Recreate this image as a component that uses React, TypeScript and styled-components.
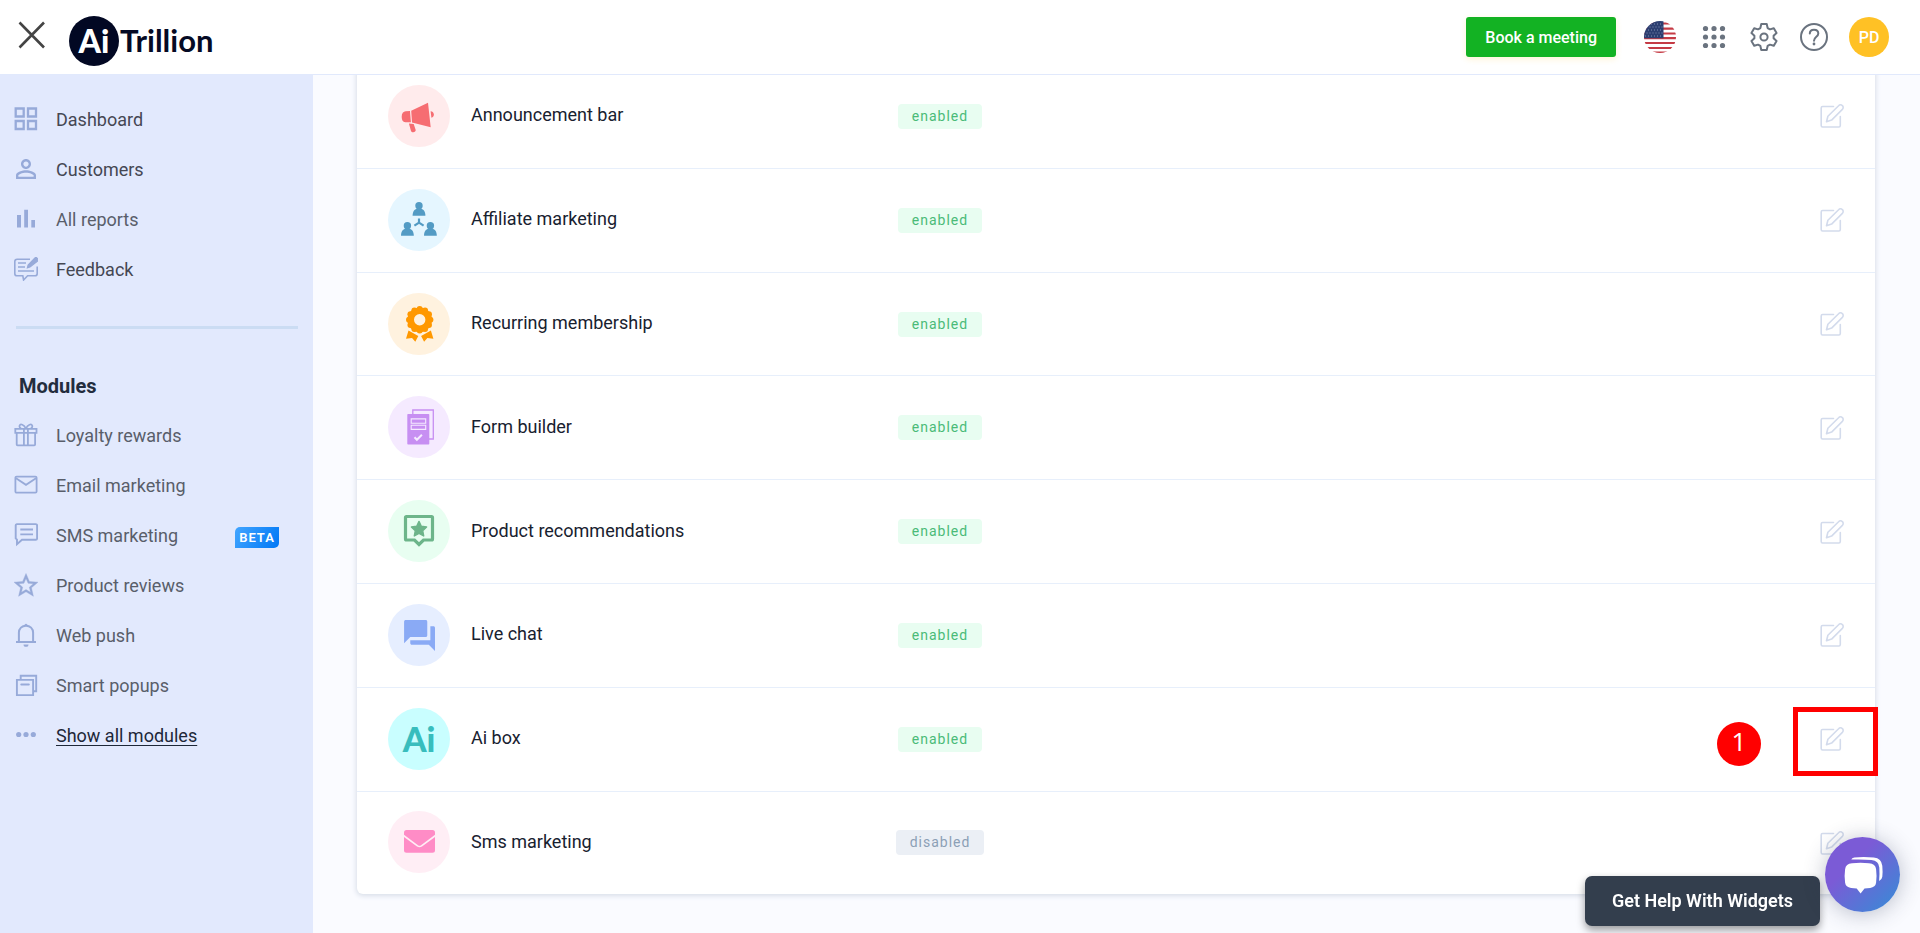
import React from "react";
import styled, { createGlobalStyle } from "styled-components";

const GlobalStyle = createGlobalStyle`
  *, *::before, *::after { box-sizing: border-box; }
  body {
    margin: 0;
    background: #fafbff;
    color: #212b3a;
    font-family: Roboto, "Liberation Sans", sans-serif;
    font-size: 18px;
  }
  button { font: inherit; border: 0; padding: 0; background: none; cursor: pointer; }
  a { color: inherit; text-decoration: none; }
`;

const Page = styled.div`
  min-height: 100vh;
  display: flex;
  flex-direction: column;
`;

/* ---------- header ---------- */

const Header = styled.header`
  display: flex;
  align-items: center;
  gap: 22px;
  height: 75px;
  padding: 0 31px 0 18px;
  background: #fff;
  border-bottom: 1px solid #e1e9fc;
  position: relative;
  z-index: 1;
`;

const CloseButton = styled.button`
  display: flex;
  width: 28px;
  height: 28px;
  margin-bottom: 4px;
  color: #444;
`;

const Logo = styled.a`
  display: flex;
  align-items: center;
  gap: 1px;
  margin: 7px auto 0 1px;
  font-family: Lato, sans-serif;
  font-weight: 700;
  font-size: 31px;
  color: #050a24;
`;

const LogoMark = styled.span`
  width: 50px;
  height: 50px;
  border-radius: 50%;
  background: #020823;
  color: #fff;
  font-size: 32px;
  font-weight: 900;
  line-height: 50px;
  text-align: center;
`;

const LogoName = styled.span`
  padding-bottom: 2px;
`;

const MeetingButton = styled.button`
  height: 40px;
  padding: 0 19px;
  margin-right: 6px;
  border-radius: 3px;
  background: #13b223;
  box-shadow: 0 2px 6px rgba(255, 193, 37, 0.2);
  color: #fff;
  font-size: 16px;
  font-weight: 500;
`;

const IconButton = styled.button`
  display: flex;
  color: #6a737f;
`;

const FlagButton = styled(IconButton)`
  margin-right: 2px;
`;

const Avatar = styled.button`
  width: 40px;
  height: 40px;
  margin-left: -1px;
  border-radius: 50%;
  background: #ffc125;
  color: #fff;
  font-size: 16px;
  font-weight: 500;
`;

/* ---------- sidebar ---------- */

const Body = styled.div`
  flex: 1;
  display: flex;
`;

const Sidebar = styled.nav`
  flex: none;
  width: 313px;
  padding: 19px 15px 0 14px;
  background: #e2e9fd;
`;

const NavList = styled.ul`
  list-style: none;
  margin: 0;
  padding: 0;
`;

const NavLink = styled.a<{ $tone?: "dark" | "strong" }>`
  display: flex;
  align-items: center;
  gap: 18px;
  height: 50px;
  padding-right: 19px;
  color: ${(p) => (p.$tone === "strong" ? "#1d2738" : p.$tone === "dark" ? "#454753" : "#595e6a")};
  text-decoration: ${(p) => (p.$tone === "strong" ? "underline" : "none")};
  text-underline-offset: 3px;
  text-decoration-thickness: 1px;

  svg { flex: none; color: #97aad9; }
`;

const Divider = styled.hr`
  height: 3px;
  margin: 32px 0 33px 2px;
  border: 0;
  background: #cbdcf3;
`;

const SideHeading = styled.h2`
  margin: 0 0 0 5px;
  font-size: 20px;
  font-weight: 700;
  line-height: 48px;
  color: #232d3e;
`;

const Beta = styled.span`
  margin-left: auto;
  width: 44px;
  margin-top: 4px;
  border-radius: 5px 0;
  background: linear-gradient(120deg, #42a5ff, #0077f5);
  color: #fff;
  font-size: 13px;
  font-weight: 600;
  letter-spacing: 1px;
  line-height: 21px;
  text-align: center;
`;

/* ---------- module list ---------- */

const Main = styled.main`
  flex: 1;
  min-width: 0;
  padding: 0 45px 38px 44px;
`;

/* The list starts slightly under the header, as if scrolled. */
const Card = styled.section`
  margin-top: -10px;
  background: #fff;
  border-radius: 6px;
  box-shadow: 0 1px 5px 1px #d9dfe9;
`;

const ModuleTable = styled.table`
  width: 100%;
  height: 829px;
  border-collapse: separate;
  border-spacing: 0;
  table-layout: fixed;

  tr:not(:last-child) > * { border-bottom: 1px solid #e7effb; }
`;

const NameCell = styled.th`
  width: 523px;
  padding: 0 0 1px 31px;
  text-align: left;
  font-weight: 400;
  color: #18212f;
`;

const NameInner = styled.div`
  display: flex;
  align-items: center;
  gap: 21px;
  line-height: 24px;
`;

const ModuleName = styled.span`
  padding-bottom: 1px;
`;

const StatusCell = styled.td`
  width: 120px;
  padding: 0;
  text-align: center;
`;

const ActionCell = styled.td`
  position: relative;
  padding: 0 31px 0 0;
`;

const ActionInner = styled.div`
  display: flex;
  justify-content: flex-end;
`;

const ModuleIcon = styled.span<{ $bg: string; $fg: string }>`
  display: flex;
  align-items: center;
  justify-content: center;
  width: 62px;
  height: 62px;
  border-radius: 50%;
  background: ${(p) => p.$bg};
  color: ${(p) => p.$fg};
  font-family: Lato, sans-serif;
  font-size: 34px;
  font-weight: 900;
`;

const Status = styled.span<{ $on: boolean }>`
  display: inline-block;
  padding: 0 14px;
  border-radius: 4px;
  background: ${(p) => (p.$on ? "#e8fdf1" : "#ebeff5")};
  color: ${(p) => (p.$on ? "#4abb78" : "#8ba0b6")};
  font-size: 14px;
  letter-spacing: 1px;
  line-height: 25px;
`;

const EditButton = styled.button`
  display: flex;
  color: #d3dbec;
`;

/* ---------- overlays ---------- */

const Highlight = styled.span`
  position: absolute;
  top: 19px;
  right: -3px;
  width: 85px;
  height: 69px;
  border: 5px solid #f00;
  pointer-events: none;
`;

const Step = styled.span`
  position: absolute;
  top: 34px;
  right: 114px;
  width: 44px;
  height: 44px;
  border-radius: 50%;
  background: #f00;
  color: #fff;
  font-family: "Open Sans", sans-serif;
  font-size: 26px;
  line-height: 38px;
  text-align: center;
`;

const ChatDock = styled.div`
  position: fixed;
  right: 20px;
  bottom: 7px;
  z-index: 2;
  display: flex;
  align-items: flex-end;
  gap: 5px;
`;

const ChatTip = styled.div`
  padding: 0 27px;
  border-radius: 7px;
  background: #333e4d;
  box-shadow: 0 4px 8px rgba(0, 0, 0, 0.4);
  color: #fff;
  font-weight: 600;
  line-height: 50px;
`;

const ChatButton = styled.button`
  width: 75px;
  height: 75px;
  margin-bottom: 14px;
  border-radius: 50%;
  background: linear-gradient(135deg, #7b5bd6 35%, #3f86d6 90%);
  box-shadow: 0 2px 22px rgba(40, 50, 80, 0.3);

  svg { display: block; }
`;

/* ---------- icons ---------- */

type IconProps = { children: React.ReactNode; size?: number; box?: string };

const LineIcon = ({ children, size = 24, box = "0 0 24 24" }: IconProps) => (
  <svg width={size} height={size} viewBox={box} fill="none" stroke="currentColor" strokeWidth="2" aria-hidden="true">
    {children}
  </svg>
);

const SolidIcon = ({ children, size = 24, box = "0 0 24 24" }: IconProps) => (
  <svg width={size} height={size} viewBox={box} fill="currentColor" aria-hidden="true">
    {children}
  </svg>
);

const icons = {
  dashboard: (
    <LineIcon>
      <path d="M1.7 1.500h8v8h-8zM14 1.500h8v8h-8zM1.700 14h8v8h-8zM14 14h8v8h-8z" strokeWidth="2.300" />
    </LineIcon>
  ),
  customers: (
    <SolidIcon box="2.4 2.4 19.2 19.2">
      <path d="M12 5.9c1.16 0 2.1.94 2.1 2.1s-.94 2.1-2.1 2.1S9.9 9.16 9.9 8s.94-2.1 2.1-2.1m0 9c2.97 0 6.1 1.46 6.1 2.1v1.1H5.9V17c0-.64 3.13-2.1 6.1-2.1M12 4C9.79 4 8 5.79 8 8s1.79 4 4 4 4-1.79 4-4-1.79-4-4-4zm0 9c-2.67 0-8 1.34-8 4v3h16v-3c0-2.66-5.33-4-8-4z" />
    </SolidIcon>
  ),
  reports: (
    <SolidIcon>
      <path d="M3 8h4v12.500H3zM10.200 2.700h3.800v17.800h-3.800zM17.300 13H21v7.500h-3.700z" />
    </SolidIcon>
  ),
  feedback: (
    <LineIcon>
      <path
        d="M16 2.200H3.200A2.400 2.400 0 0 0 .8 4.600v11.800a2.400 2.400 0 0 0 2.400 2.400h5.600L9.600 23l4-4.200h7.200a2.400 2.400 0 0 0 2.400-2.400V9.500"
        strokeWidth="1.600"
      />
      <path d="M4 6h8M4 10h7M4 14h16" strokeWidth="1.700" />
      <path d="M16 10l-2.600.9.700-2.800 6.600-7L22 .2 24.600 2.800 23.600 4z" fill="currentColor" strokeWidth="1.200" />
    </LineIcon>
  ),
  gift: (
    <LineIcon>
      <path d="M1.300 5.800h21.200v4H1.300zM2.700 10v11.400q0 .9.900.9h16.600q.9 0 .9-.9V10M9.900 6v16M13.900 6v16" strokeWidth="1.800" />
      <path d="M11.900 5.600C10 1.400 6.400.6 5.600 2.500 5.100 4 6 5 7 5.600M11.900 5.600c1.900-4.200 5.500-5 6.300-3.100.5 1.500-.4 2.500-1.400 3.100" strokeWidth="1.700" />
    </LineIcon>
  ),
  mail: (
    <LineIcon>
      <rect x="1.400" y="3.600" width="21.200" height="16" rx="1.200" strokeWidth="1.800" />
      <path d="M2 5.200l10 6.600 10-6.600" strokeWidth="1.800" />
    </LineIcon>
  ),
  sms: (
    <LineIcon>
      <path d="M2.800 1.100h19a1.300 1.300 0 0 1 1.300 1.300v13a1.300 1.300 0 0 1-1.300 1.300H8l-5 4.500V16.700l-1.300-1.300v-13a1.300 1.300 0 0 1 1.100-1.300z" strokeWidth="1.900" />
      <path d="M6.300 6.500H19M6.300 11.300H19" strokeWidth="1.800" />
    </LineIcon>
  ),
  star: (
    <SolidIcon box="2 1.600 20 20">
      <path d="M22 9.240l-7.190-.62L12 2 9.190 8.630 2 9.240l5.460 4.730L5.820 21 12 17.270 18.180 21l-1.630-7.030L22 9.240zM12 15.400l-3.760 2.270 1-4.280-3.320-2.880 4.380-.38L12 6.100l1.710 4.040 4.380.38-3.320 2.880 1 4.280L12 15.400z" stroke="currentColor" strokeWidth=".3" />
    </SolidIcon>
  ),
  bell: (
    <LineIcon>
      <path d="M2 19.100h20M4.900 19V9.600c0-4 3-6.900 7.100-6.900s7.100 2.900 7.100 6.900V19" />
      <path d="M10.600 2.500a1.400 1.400 0 0 1 2.800 0zM9.700 21.800h4.600a2.300 2 0 0 1-4.600 0z" fill="currentColor" strokeWidth=".4" />
    </LineIcon>
  ),
  popups: (
    <LineIcon>
      <path d="M2.900 6.900h16.200v15.200H2.900z" strokeWidth="1.900" />
      <path d="M6.700 6.500V2.800h15.500v15.400h-3" strokeWidth="1.900" />
      <path d="M7.300 11.500h7.500" strokeLinecap="round" />
    </LineIcon>
  ),
  dots: (
    <SolidIcon>
      <circle cx="4.700" cy="11.500" r="2.600" />
      <circle cx="12" cy="11.500" r="2.600" />
      <circle cx="19.300" cy="11.500" r="2.600" />
    </SolidIcon>
  ),
};

const personBody = (cx: number, top: number) => (
  <g key={`${cx}-${top}`}>
    <circle cx={cx} cy={top + 3.7} r="3.7" />
    <path d={`M${cx - 6.4} ${top + 13.7}c0-4.200 1.900-6.300 4.400-6.900h4c2.500.6 4.400 2.700 4.400 6.900z`} />
  </g>
);

/* Scalloped rim of the medal, twelve bumps round its centre. */
const bumps = Array.from({ length: 12 }, (_, i) => {
  const a = (i * Math.PI) / 6;
  return <circle key={i} cx={18.7 + 10.7 * Math.sin(a)} cy={13.7 - 10.7 * Math.cos(a)} r="3" />;
});

const moduleIcons = {
  megaphone: (
    <SolidIcon size={36} box="0 0 36 36">
      <path d="M10.200 12.800L27 4.700l2.700 24.600-18.700-4.900zM9 13l.9 11.300H4.500C1.800 24.300.7 22 .7 18.600c0-3.200 1.500-5.300 4-5.400zM7.900 25.600l4.800.3 2 6.200c.2 1-1 2.100-2.500 2.100-1.100 0-1.900-.4-2.200-1.300zM29.600 13.200c2 .2 3.300 1.700 3.300 3.300 0 1.500-.8 2.800-2.500 3.200z" />
    </SolidIcon>
  ),
  affiliate: (
    <SolidIcon size={36} box="0 0 36 36">
      {personBody(18, 0)}
      {personBody(6.4, 20)}
      {personBody(29.4, 20)}
      <path d="M18 16.500v4.200l-4.600 3M18 20.700l4.600 3" fill="none" stroke="currentColor" strokeWidth="2.200" />
    </SolidIcon>
  ),
  ribbon: (
    <SolidIcon size={36} box="0 0 36 36">
      {bumps}
      <circle cx="18.700" cy="13.700" r="9" fill="none" stroke="currentColor" strokeWidth="6.600" />
      <path d="M7.500 24.500l9.800 5.400-3 5.800-3.300-3.700-6 .8zM29.900 24.500l-9.800 5.400 3 5.800 3.300-3.700 6 .8z" />
    </SolidIcon>
  ),
  form: (
    <SolidIcon size={36} box="0 0 36 36">
      <path d="M11.800 5V1h20.500v29H28" fill="none" stroke="currentColor" strokeWidth="1.300" />
      <rect x="6.300" y="5" width="22" height="30.500" rx=".8" />
      <path d="M10.200 9.900h14.500v4.300H10.200zM10.200 16.300h14.500v4.100H10.200z" fill="none" stroke="#f5eaff" strokeWidth="1.100" />
      <path d="M13.500 28.200l2.400 2.600 5-5" fill="none" stroke="#f5eaff" strokeWidth="2" />
    </SolidIcon>
  ),
  product: (
    <SolidIcon size={36} box="0 0 36 36">
      <path
        d="M5.500 3.500h25q1 0 1 1V26q0 1-1 1h-8L18 31.500 13.500 27h-8q-1 0-1-1V4.500q0-1 1-1z"
        fill="none"
        stroke="currentColor"
        strokeWidth="3.200"
      />
      <path
        d="M18 8.400l2.300 4.900 5.300.7-3.900 3.700 1 5.300-4.700-2.600-4.700 2.600 1-5.300-3.900-3.700 5.300-.7z"
        stroke="currentColor"
        strokeLinejoin="round"
        strokeWidth="1.400"
      />
    </SolidIcon>
  ),
  chat: (
    <SolidIcon size={36} box="0 0 23.300 23.300">
      <path d="M21 6h-2v9H6v2c0 .55.45 1 1 1h11l4 4V7c0-.55-.45-1-1-1zm-4 6V3c0-.55-.45-1-1-1H3c-.55 0-1 .45-1 1v14l4-4h10c.55 0 1-.45 1-1z" />
    </SolidIcon>
  ),
  ai: "Ai",
  envelope: (
    <SolidIcon size={36} box="0 0 36 36">
      <path d="M3 8.500Q3 6 5.500 6h26Q34 6 34 8.500v2.300L20 21.200q-1.500 1-3 0L3 10.800z" />
      <path d="M3 12.900l13 9.600q2.500 1.600 5 0l13-9.600V26.200q0 2.500-2.500 2.500h-26Q3 28.700 3 26.200z" />
    </SolidIcon>
  ),
};

/* Outline of a six-toothed cog in a 28px box. */
const gearPath = (() => {
  const points: string[] = [];
  for (let i = 0; i < 6; i++) {
    [[-22, 9.7], [-12, 13.2], [12, 13.2], [22, 9.7]].forEach(([d, r]) => {
      const a = ((i * 60 + d) * Math.PI) / 180;
      points.push(`${(14 + r * Math.sin(a)).toFixed(2)} ${(14 - r * Math.cos(a)).toFixed(2)}`);
    });
  }
  return `M${points.join("L")}Z`;
})();

const FlagIcon = () => (
  <svg width="32" height="32" viewBox="0 0 32 32" aria-hidden="true">
    <defs>
      <clipPath id="flag-round">
        <circle cx="16" cy="16" r="16" />
      </clipPath>
    </defs>
    <g clipPath="url(#flag-round)">
      <path fill="#fff" d="M0 0h32v32H0z" />
      <path
        d="M0 2.500h32M0 7.600h32M0 12.500h32M0 17.200h32M0 22h32M0 27h32M0 31.500h32"
        stroke="#c53b45"
        strokeWidth="2.200"
      />
      <path fill="#2c3e70" d="M0 0h19.500v17.200H0z" />
      <path d="M1 3h18M2.500 6h17M1 9h18M2.500 12h17M1 15h18" stroke="#8390b3" strokeWidth="1" strokeDasharray="1 2" />
    </g>
  </svg>
);

const EditIcon = () => (
  <svg width="24" height="24" viewBox="0 0 24 24" fill="none" stroke="currentColor" strokeWidth="1.600" strokeLinecap="round" strokeLinejoin="round" aria-hidden="true">
    <path d="M13.500 2.500H2.600A1.400 1.400 0 0 0 1.200 3.900v17.700A1.400 1.400 0 0 0 2.600 23h16.300a1.400 1.400 0 0 0 1.400-1.400V12.500" />
    <path d="M6.500 17.800l1.400-5.500L18.600 1.700a2.500 2.500 0 0 1 3.800 0 2.500 2.500 0 0 1 0 3.600L11.600 16.100z" />
  </svg>
);

/* ---------- data ---------- */

type NavItem = { icon: keyof typeof icons; label: string; tone?: "dark" | "strong"; beta?: boolean };

const mainNav: NavItem[] = [
  { icon: "dashboard", label: "Dashboard", tone: "dark" },
  { icon: "customers", label: "Customers", tone: "dark" },
  { icon: "reports", label: "All reports" },
  { icon: "feedback", label: "Feedback", tone: "dark" },
];

const moduleNav: NavItem[] = [
  { icon: "gift", label: "Loyalty rewards" },
  { icon: "mail", label: "Email marketing" },
  { icon: "sms", label: "SMS marketing", beta: true },
  { icon: "star", label: "Product reviews" },
  { icon: "bell", label: "Web push" },
  { icon: "popups", label: "Smart popups" },
  { icon: "dots", label: "Show all modules", tone: "strong" },
];

type Module = {
  name: string;
  icon: keyof typeof moduleIcons;
  bg: string;
  fg: string;
  enabled: boolean;
  step?: number;
};

const modules: Module[] = [
  { name: "Announcement bar", icon: "megaphone", bg: "#ffebec", fg: "#f66d72", enabled: true },
  { name: "Affiliate marketing", icon: "affiliate", bg: "#e5f6ff", fg: "#539bc4", enabled: true },
  { name: "Recurring membership", icon: "ribbon", bg: "#fff2df", fg: "#ff9800", enabled: true },
  { name: "Form builder", icon: "form", bg: "#f5eaff", fg: "#c78ff2", enabled: true },
  { name: "Product recommendations", icon: "product", bg: "#e8fef1", fg: "#6db58a", enabled: true },
  { name: "Live chat", icon: "chat", bg: "#e6eeff", fg: "#8aaaf5", enabled: true },
  { name: "Ai box", icon: "ai", bg: "#c9feff", fg: "#38bdbd", enabled: true, step: 1 },
  { name: "Sms marketing", icon: "envelope", bg: "#ffeef5", fg: "#ff8cc6", enabled: false },
];

const NavGroup = ({ items }: { items: NavItem[] }) => (
  <NavList>
    {items.map((item) => (
      <li key={item.label}>
        <NavLink href="#" $tone={item.tone}>
          {icons[item.icon]}
          <span>{item.label}</span>
          {item.beta && <Beta>BETA</Beta>}
        </NavLink>
      </li>
    ))}
  </NavList>
);

export default function App() {
  return (
    <Page>
      <GlobalStyle />
      <Header>
        <CloseButton aria-label="Close menu">
          <svg width="28" height="28" viewBox="0 0 28 28" fill="none" stroke="currentColor" strokeWidth="2.600">
            <path d="M1.500 1.500l24.500 25M26 1.500l-24.500 25" />
          </svg>
        </CloseButton>
        <Logo href="#">
          <LogoMark>Ai</LogoMark>
          <LogoName>Trillion</LogoName>
        </Logo>
        <MeetingButton>Book a meeting</MeetingButton>
        <FlagButton aria-label="Language">
          <FlagIcon />
        </FlagButton>
        <IconButton aria-label="Apps">
          <SolidIcon size={28} box="0 0 28 28">
            {[5.5, 14, 22.5].map((y) => [5.5, 14, 22.5].map((x) => <circle key={`${x}-${y}`} cx={x} cy={y} r="2.600" />))}
          </SolidIcon>
        </IconButton>
        <IconButton aria-label="Settings">
          <LineIcon size={28} box="0 0 28 28">
            <path d={gearPath} strokeLinejoin="round" />
            <circle cx="14" cy="14" r="3.600" />
          </LineIcon>
        </IconButton>
        <IconButton aria-label="Help">
          <LineIcon size={28} box="0 0 28 28">
            <circle cx="14" cy="14" r="13" />
            <path d="M9.800 10.600C9.800 8.300 11.500 6.700 14 6.700s4.300 1.500 4.300 3.700c0 3.300-4.300 3.300-4.300 7.300" strokeLinecap="round" />
            <circle cx="14" cy="21" r="1.400" fill="currentColor" stroke="none" />
          </LineIcon>
        </IconButton>
        <Avatar>PD</Avatar>
      </Header>
      <Body>
        <Sidebar>
          <NavGroup items={mainNav} />
          <Divider />
          <SideHeading>Modules</SideHeading>
          <NavGroup items={moduleNav} />
        </Sidebar>
        <Main>
          <Card>
            <ModuleTable>
              <tbody>
                {modules.map((m) => (
                  <tr key={m.name}>
                    <NameCell scope="row">
                      <NameInner>
                        <ModuleIcon $bg={m.bg} $fg={m.fg}>{moduleIcons[m.icon]}</ModuleIcon>
                        <ModuleName>{m.name}</ModuleName>
                      </NameInner>
                    </NameCell>
                    <StatusCell>
                      <Status $on={m.enabled}>{m.enabled ? "enabled" : "disabled"}</Status>
                    </StatusCell>
                    <ActionCell>
                      <ActionInner>
                        <EditButton aria-label={`Edit ${m.name}`}>
                          <EditIcon />
                        </EditButton>
                      </ActionInner>
                      {m.step && (
                        <>
                          <Step>{m.step}</Step>
                          <Highlight />
                        </>
                      )}
                    </ActionCell>
                  </tr>
                ))}
              </tbody>
            </ModuleTable>
          </Card>
        </Main>
      </Body>
      <ChatDock>
        <ChatTip>Get Help With Widgets</ChatTip>
        <ChatButton aria-label="Open chat">
          <svg width="75" height="75" viewBox="0 0 75 75" fill="#fff" aria-hidden="true">
            <path d="M27 26.300q8.500-1 17 0 6.500.6 7.100 6 .9 6.700 0 13.400-.6 4.500-6 5.200l-5.600.5-3.900 5-3.900-5-5.600-.5q-5.400-.7-6-5.200-1-6.700 0-13.400.6-5.400 6.900-6z" />
            <path d="M26.300 22.600q.5-1.800 3-2.200 9-1 19.500 0 7.800.8 8.500 8.300.6 7 0 11-.4 3-3.200 4.300.7-7 .2-13.600-.6-6.600-7.800-7.300-9-1-20.200-.5z" />
          </svg>
        </ChatButton>
      </ChatDock>
    </Page>
  );
}
